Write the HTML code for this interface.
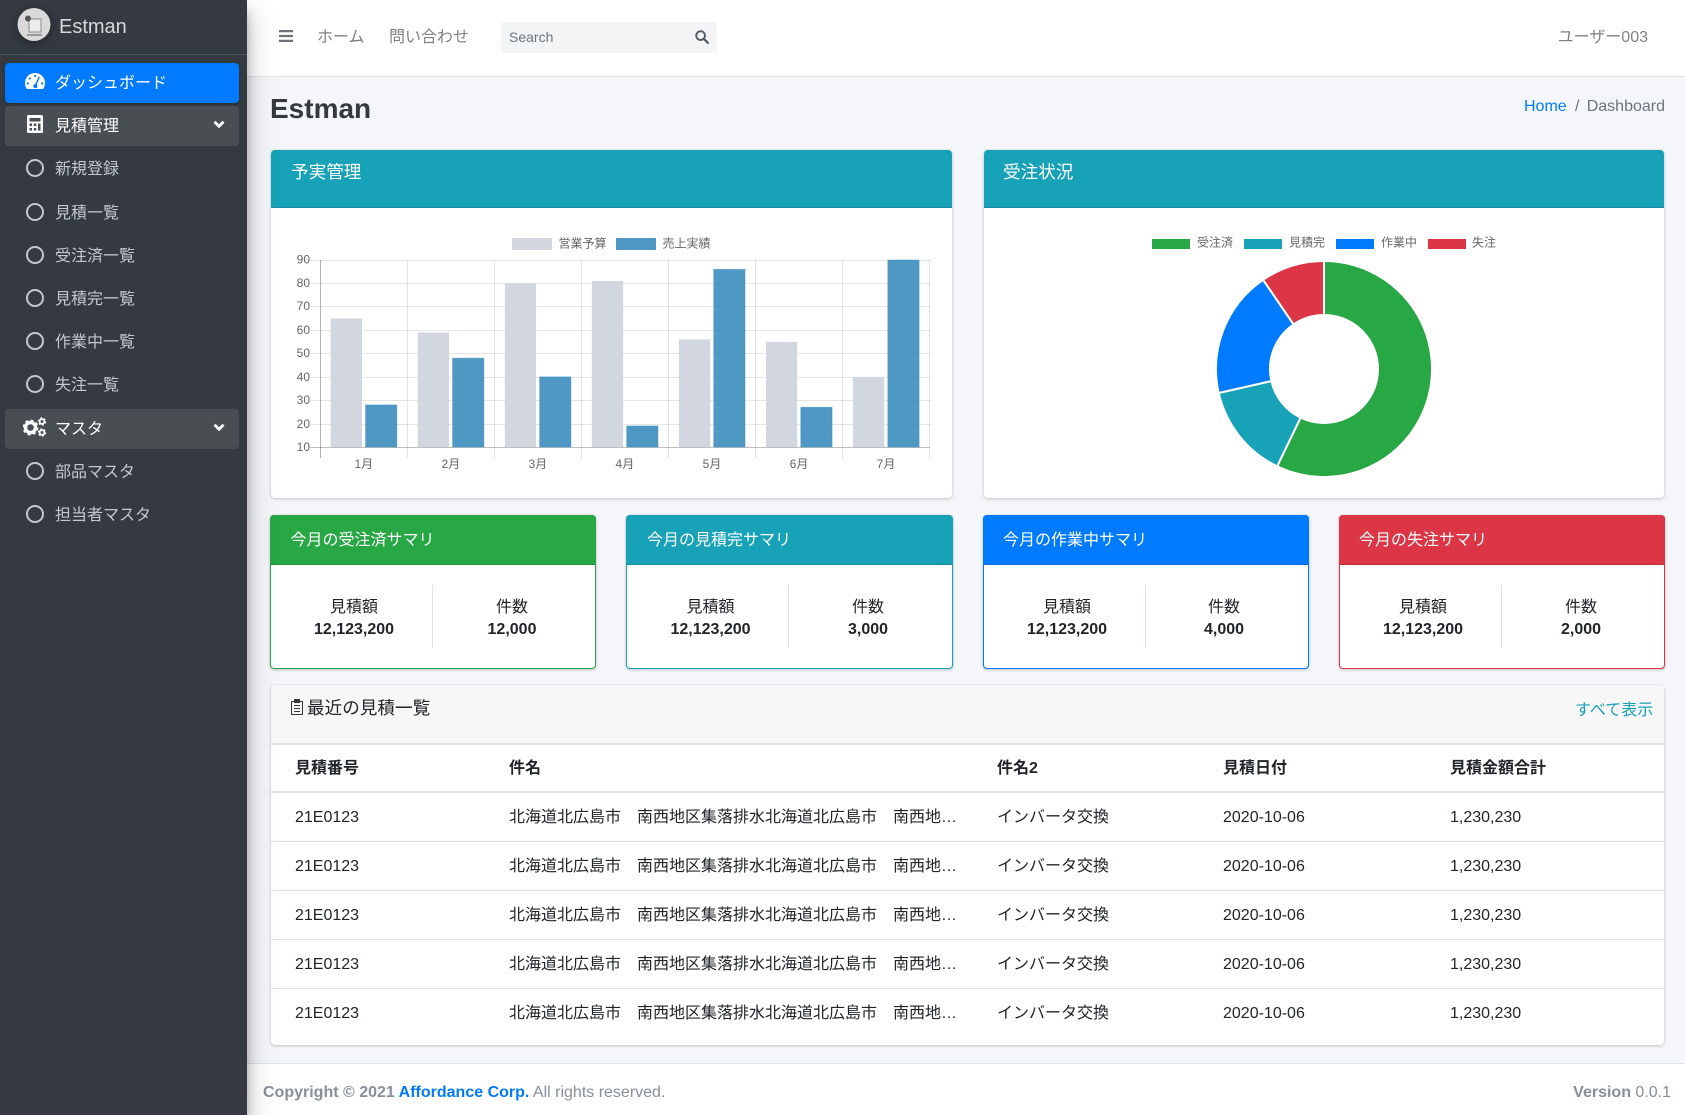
<!DOCTYPE html>
<html lang="ja"><head><meta charset="utf-8"><title>Estman</title>
<style>
html,body{margin:0;padding:0;width:1685px;height:1115px;overflow:hidden;background:#f4f6f9;font-family:"Liberation Sans","Noto Sans CJK JP",sans-serif;font-size:16px;color:#212529}
.a{position:absolute;box-sizing:border-box}
.t{position:absolute;white-space:nowrap;line-height:24px;height:24px;margin-top:2px}
.c{transform:translateX(-50%)}
.nv{color:#c2c7d0;left:55px}
.card{position:absolute;box-sizing:border-box;background:#fff;border-radius:4px;box-shadow:0 0 1px rgba(0,0,0,.125),0 1px 3px rgba(0,0,0,.2)}
.hd{position:absolute;left:0;right:0;top:0;border-radius:4px 4px 0 0;border-bottom:1px solid rgba(0,0,0,.125);box-sizing:border-box}
.b{font-weight:700}
.w{color:#fff}
.ln{position:absolute;left:271px;width:1393px;height:1px;background:#dee2e6}
.el{width:452px;overflow:hidden;text-overflow:ellipsis}
</style></head><body>

<!-- top nav -->
<div class="a" style="left:247px;top:0;width:1438px;height:77px;background:#fff;border-bottom:1px solid #dee2e6"></div>
<svg class="a" style="left:279px;top:30px" width="14" height="12"><path d="M0 0h14v2.2H0zM0 4.9h14v2.2H0zM0 9.8h14V12H0z" fill="#6f7378"/></svg>
<div class="t" style="left:317px;top:24px;color:rgba(0,0,0,.5)">ホーム</div>
<div class="t" style="left:389px;top:24px;color:rgba(0,0,0,.5)">問い合わせ</div>
<div class="a" style="left:501px;top:22px;width:216px;height:31px;background:#f2f4f6;border-radius:3px"></div>
<div class="t" style="left:509px;top:25px;margin-top:0;font-size:14px;color:#6c757d">Search</div>
<svg class="a" style="left:695px;top:30px" width="14" height="14" viewBox="0 0 15 15"><circle cx="6" cy="6" r="4.7" fill="none" stroke="#555b61" stroke-width="2"/><path d="M9.6 9.6L13.8 13.8" stroke="#555b61" stroke-width="2.4" stroke-linecap="round"/></svg>
<div class="t" style="right:37px;top:24px;color:rgba(0,0,0,.5)">ユーザー003</div>

<!-- page heading -->
<div class="t b" style="left:270px;top:91px;margin-top:0;height:36px;line-height:36px;font-size:28px;color:#343a40">Estman</div>
<div class="t" style="left:1524px;top:93px;color:#007bff">Home</div>
<div class="t" style="left:1575px;top:93px;color:#6c757d">/</div>
<div class="t" style="right:20px;top:93px;color:#6c757d">Dashboard</div>

<!-- bar chart card -->
<div class="card" style="left:271px;top:150px;width:681px;height:348px">
  <div class="hd" style="height:58px;background:#17a2b8"></div>
</div>
<div class="t w" style="left:291px;top:160px;margin-top:0;font-size:17.6px">予実管理</div>

<svg class="a" style="left:271px;top:208px" width="681" height="280" viewBox="271 208 681 280">
  <g stroke="rgba(0,0,0,.1)" stroke-width="1" fill="none">
    <path d="M310 260.5H930M310 283.5H930M310 306.5H930M310 330.5H930M310 353.5H930M310 377.5H930M310 400.5H930M310 424.5H930"/>
    <path d="M407.5 260V458M494.5 260V458M581.5 260V458M668.5 260V458M755.5 260V458M842.5 260V458M929.5 260V458"/>
  </g>
  <path d="M320.5 260V458" stroke="rgba(0,0,0,.3)" fill="none"/>
  <path d="M310 447.5H930" stroke="rgba(0,0,0,.25)" fill="none"/>
  <g fill="#d2d6de">
    <rect x="330.7" y="318.44" width="31.3" height="128.56"/>
    <rect x="417.76" y="332.46" width="31.3" height="114.54"/>
    <rect x="504.8" y="283.37" width="31.3" height="163.63"/>
    <rect x="591.84" y="281.04" width="31.3" height="165.96"/>
    <rect x="678.88" y="339.47" width="31.3" height="107.53"/>
    <rect x="765.92" y="341.81" width="31.3" height="105.19"/>
    <rect x="852.96" y="376.87" width="31.3" height="70.13"/>
  </g>
  <g fill="rgba(60,141,188,.9)" stroke="rgba(60,141,188,.45)">
    <rect x="365.56" y="404.92" width="31.3" height="42.08"/>
    <rect x="452.6" y="358.17" width="31.3" height="88.83"/>
    <rect x="539.64" y="376.87" width="31.3" height="70.13"/>
    <rect x="626.68" y="425.96" width="31.3" height="21.04"/>
    <rect x="713.72" y="269.35" width="31.3" height="177.65"/>
    <rect x="800.76" y="407.26" width="31.3" height="39.74"/>
    <rect x="887.8" y="260" width="31.3" height="187"/>
  </g>
  <rect x="512" y="238" width="40" height="12" fill="#d2d6de"/>
  <rect x="616" y="238" width="40" height="12" fill="#4f97c4"/>
  <g font-family="'Liberation Sans','Noto Sans CJK JP',sans-serif" font-size="12" fill="#666">
    <text x="558.5" y="247.5">営業予算</text>
    <text x="662.5" y="247.5">売上実績</text>
    <g text-anchor="end">
      <text x="310" y="263.5">90</text><text x="310" y="287">80</text><text x="310" y="310">70</text><text x="310" y="334">60</text><text x="310" y="357">50</text><text x="310" y="381">40</text><text x="310" y="404">30</text><text x="310" y="428">20</text><text x="310" y="451">10</text>
    </g>
    <g text-anchor="middle">
      <text x="363.8" y="468">1月</text><text x="450.9" y="468">2月</text><text x="537.9" y="468">3月</text><text x="624.9" y="468">4月</text><text x="712" y="468">5月</text><text x="799" y="468">6月</text><text x="886" y="468">7月</text>
    </g>
  </g>
</svg>

<!-- doughnut card -->
<div class="card" style="left:984px;top:150px;width:680px;height:348px">
  <div class="hd" style="height:58px;background:#17a2b8"></div>
</div>
<div class="t w" style="left:1003px;top:160px;margin-top:0;font-size:17.6px">受注状況</div>
<svg class="a" style="left:984px;top:208px" width="680" height="280" viewBox="984 208 680 280">
  <g stroke="#fff" stroke-width="2">
    <path fill="#28a745" d="M1324 261A108 108 0 1 1 1277.14 466.31L1300.57 417.65A54 54 0 1 0 1324 315Z"/>
    <path fill="#17a2b8" d="M1277.14 466.31A108 108 0 0 1 1218.71 393.03L1271.36 381.02A54 54 0 0 0 1300.57 417.65Z"/>
    <path fill="#007bff" d="M1218.71 393.03A108 108 0 0 1 1263.14 279.77L1293.57 324.39A54 54 0 0 0 1271.36 381.02Z"/>
    <path fill="#dc3545" d="M1263.14 279.77A108 108 0 0 1 1324 261L1324 315A54 54 0 0 0 1293.57 324.39Z"/>
  </g>
  <rect x="1152" y="239" width="38" height="10" fill="#28a745"/>
  <rect x="1244" y="239" width="38" height="10" fill="#17a2b8"/>
  <rect x="1336" y="239" width="38" height="10" fill="#007bff"/>
  <rect x="1428" y="239" width="38" height="10" fill="#dc3545"/>
  <g font-family="'Liberation Sans','Noto Sans CJK JP',sans-serif" font-size="12" fill="#666">
    <text x="1197" y="246.5">受注済</text><text x="1289" y="246.5">見積完</text><text x="1381" y="246.5">作業中</text><text x="1472" y="246.5">失注</text>
  </g>
</svg>

<!-- summary cards -->
<div class="card" style="left:270px;top:515px;width:326px;height:154px;border:1px solid #28a745"><div class="hd" style="left:-1px;right:-1px;top:-1px;height:50px;background:#28a745"></div></div>
<div class="card" style="left:626px;top:515px;width:327px;height:154px;border:1px solid #17a2b8"><div class="hd" style="left:-1px;right:-1px;top:-1px;height:50px;background:#17a2b8"></div></div>
<div class="card" style="left:983px;top:515px;width:326px;height:154px;border:1px solid #007bff"><div class="hd" style="left:-1px;right:-1px;top:-1px;height:50px;background:#007bff"></div></div>
<div class="card" style="left:1339px;top:515px;width:326px;height:154px;border:1px solid #dc3545"><div class="hd" style="left:-1px;right:-1px;top:-1px;height:50px;background:#dc3545"></div></div>

<div class="t w" style="left:290.5px;top:527px">今月の受注済サマリ</div>
<div class="t w" style="left:647px;top:527px">今月の見積完サマリ</div>
<div class="t w" style="left:1003px;top:527px">今月の作業中サマリ</div>
<div class="t w" style="left:1359px;top:527px">今月の失注サマリ</div>

<div class="a" style="left:432px;top:585px;width:1px;height:63px;background:#dee2e6"></div>
<div class="a" style="left:788px;top:585px;width:1px;height:63px;background:#dee2e6"></div>
<div class="a" style="left:1145px;top:585px;width:1px;height:63px;background:#dee2e6"></div>
<div class="a" style="left:1501px;top:585px;width:1px;height:63px;background:#dee2e6"></div>

<div class="t c" style="left:354px;top:594px">見積額</div><div class="t c b" style="left:354px;top:616px">12,123,200</div>
<div class="t c" style="left:512px;top:594px">件数</div><div class="t c b" style="left:512px;top:616px">12,000</div>
<div class="t c" style="left:710.5px;top:594px">見積額</div><div class="t c b" style="left:710.5px;top:616px">12,123,200</div>
<div class="t c" style="left:868px;top:594px">件数</div><div class="t c b" style="left:868px;top:616px">3,000</div>
<div class="t c" style="left:1067px;top:594px">見積額</div><div class="t c b" style="left:1067px;top:616px">12,123,200</div>
<div class="t c" style="left:1224px;top:594px">件数</div><div class="t c b" style="left:1224px;top:616px">4,000</div>
<div class="t c" style="left:1423px;top:594px">見積額</div><div class="t c b" style="left:1423px;top:616px">12,123,200</div>
<div class="t c" style="left:1581px;top:594px">件数</div><div class="t c b" style="left:1581px;top:616px">2,000</div>

<!-- table card -->
<div class="card" style="left:271px;top:685px;width:1393px;height:360px">
  <div class="hd" style="height:58px;background:#f7f7f7;border-bottom:0"></div>
</div>
<svg class="a" style="left:290px;top:699px" width="14" height="16" viewBox="0 0 14 16" fill="none" stroke="#33383d" stroke-width="1"><rect x="1.500" y="2.500" width="11" height="13"/><rect x="4.500" y=".5" width="5" height="3" fill="#33383d"/><path d="M4 6.500h6M4 9.500h6M4 12.500h6"/></svg>
<div class="t" style="left:307px;top:695px;margin-top:1px;font-size:17.6px">最近の見積一覧</div>
<div class="t" style="left:1575px;top:697px">
<span style="color:#17a2b8">すべて表示</span></div>
<div class="ln" style="top:743px;height:2px"></div>
<div class="ln" style="top:791px;height:2px"></div>
<div class="ln" style="top:841px"></div>
<div class="ln" style="top:890px"></div>
<div class="ln" style="top:939px"></div>
<div class="ln" style="top:988px"></div>

<div class="t b" style="left:295px;top:755px">見積番号</div>
<div class="t b" style="left:509px;top:755px">件名</div>
<div class="t b" style="left:997px;top:755px">件名2</div>
<div class="t b" style="left:1223px;top:755px">見積日付</div>
<div class="t b" style="left:1450px;top:755px">見積金額合計</div>

<div class="t" style="left:295px;top:804px">21E0123</div>
<div class="t el" style="left:509px;top:804px">北海道北広島市　南西地区集落排水北海道北広島市　南西地区集落排水</div>
<div class="t" style="left:997px;top:804px">インバータ交換</div>
<div class="t" style="left:1223px;top:804px">2020-10-06</div>
<div class="t" style="left:1450px;top:804px">1,230,230</div>

<div class="t" style="left:295px;top:853px">21E0123</div>
<div class="t el" style="left:509px;top:853px">北海道北広島市　南西地区集落排水北海道北広島市　南西地区集落排水</div>
<div class="t" style="left:997px;top:853px">インバータ交換</div>
<div class="t" style="left:1223px;top:853px">2020-10-06</div>
<div class="t" style="left:1450px;top:853px">1,230,230</div>

<div class="t" style="left:295px;top:902px">21E0123</div>
<div class="t el" style="left:509px;top:902px">北海道北広島市　南西地区集落排水北海道北広島市　南西地区集落排水</div>
<div class="t" style="left:997px;top:902px">インバータ交換</div>
<div class="t" style="left:1223px;top:902px">2020-10-06</div>
<div class="t" style="left:1450px;top:902px">1,230,230</div>

<div class="t" style="left:295px;top:951px">21E0123</div>
<div class="t el" style="left:509px;top:951px">北海道北広島市　南西地区集落排水北海道北広島市　南西地区集落排水</div>
<div class="t" style="left:997px;top:951px">インバータ交換</div>
<div class="t" style="left:1223px;top:951px">2020-10-06</div>
<div class="t" style="left:1450px;top:951px">1,230,230</div>

<div class="t" style="left:295px;top:1000px">21E0123</div>
<div class="t el" style="left:509px;top:1000px">北海道北広島市　南西地区集落排水北海道北広島市　南西地区集落排水</div>
<div class="t" style="left:997px;top:1000px">インバータ交換</div>
<div class="t" style="left:1223px;top:1000px">2020-10-06</div>
<div class="t" style="left:1450px;top:1000px">1,230,230</div>

<!-- footer -->
<div class="a" style="left:247px;top:1063px;width:1438px;height:52px;background:#fff;border-top:1px solid #dee2e6"></div>
<div class="t" style="left:263px;top:1080px;margin-top:1px;color:#869099"><b>Copyright © 2021 <span style="color:#007bff">Affordance Corp.</span></b> All rights reserved.</div>
<div class="t" style="right:14px;top:1080px;margin-top:1px;color:#869099"><b>Version</b> 0.0.1</div>

<!-- sidebar -->
<div class="a" style="left:0;top:0;width:247px;height:1115px;background:#343a40;box-shadow:0 14px 28px rgba(0,0,0,.25),0 10px 10px rgba(0,0,0,.22)"></div>
<div class="a" style="left:0;top:54px;width:247px;height:1px;background:#4b545c"></div>
<svg class="a" style="left:16px;top:6px;overflow:visible;filter:drop-shadow(0 3px 5px rgba(0,0,0,.35))" width="38" height="38" viewBox="0 0 38 38">
  <circle cx="18" cy="18.500" r="16.500" fill="#d9d9d9"/>
  <rect x="13" y="13" width="12" height="13" fill="#ececec" stroke="#8b8b8b" stroke-width="1"/>
  <circle cx="12" cy="12.500" r="3" fill="#555"/>
  <rect x="11" y="28" width="15" height="2" fill="#999"/>
</svg>
<div class="t" style="left:59px;top:13px;font-size:20px;color:rgba(255,255,255,.8)">Estman</div>

<div class="a" style="left:5px;top:63px;width:234px;height:40px;background:#007bff;border-radius:4px;box-shadow:0 1px 3px rgba(0,0,0,.2)"></div>
<svg class="a" style="left:25px;top:73px" width="20" height="16" viewBox="0 0 20 16"><path d="M2 16Q0 13.500 0 10A10 10 0 0 1 20 10Q20 13.500 18 16Z" fill="#fff"/><g fill="#007bff"><circle cx="10" cy="3" r="1.100"/><circle cx="4.800" cy="5.500" r="1.100"/><circle cx="2.800" cy="10.500" r="1.100"/><circle cx="17.200" cy="10.500" r="1.100"/><path d="M13.600 3.600L14.900 4.100L11.800 11.500A2.100 2.100 0 1 1 10.300 11Z"/></g></svg>
<div class="t w" style="left:55px;top:70px">ダッシュボード</div>

<div class="a" style="left:5px;top:106px;width:234px;height:40px;background:#494e53;border-radius:4px"></div>
<svg class="a" style="left:27px;top:115px" width="16" height="18" viewBox="0 0 16 18"><rect width="16" height="18" rx="1.500" fill="#fff"/><g fill="#494e53"><rect x="2.500" y="3" width="11" height="3.500"/><rect x="2.500" y="8.500" width="2.500" height="2.500"/><rect x="6.800" y="8.500" width="2.500" height="2.500"/><rect x="11" y="8.500" width="2.500" height="7"/><rect x="2.500" y="13" width="2.500" height="2.500"/><rect x="6.800" y="13" width="2.500" height="2.500"/></g></svg>
<div class="t w" style="left:55px;top:113px">見積管理</div>
<svg class="a" style="left:213px;top:120px" width="12" height="9" viewBox="0 0 12 9"><path d="M1.500 1.800L6 6.300L10.500 1.800" fill="none" stroke="#fff" stroke-width="2.800"/></svg>

<svg class="a" style="left:25px;top:158px" width="20" height="370" viewBox="0 0 20 370" fill="none" stroke="#c2c7d0" stroke-width="2">
  <circle cx="10" cy="10" r="8"/><circle cx="10" cy="54" r="8"/><circle cx="10" cy="97" r="8"/><circle cx="10" cy="140" r="8"/><circle cx="10" cy="183" r="8"/><circle cx="10" cy="226" r="8"/><circle cx="10" cy="313" r="8"/><circle cx="10" cy="356" r="8"/>
</svg>

<div class="t nv" style="top:156px">新規登録</div>
<div class="t nv" style="top:200px">見積一覧</div>
<div class="t nv" style="top:243px">受注済一覧</div>
<div class="t nv" style="top:286px">見積完一覧</div>
<div class="t nv" style="top:329px">作業中一覧</div>
<div class="t nv" style="top:372px">失注一覧</div>

<div class="a" style="left:5px;top:409px;width:234px;height:40px;background:#494e53;border-radius:4px"></div>
<svg class="a" style="left:23px;top:417px" width="24" height="20" viewBox="0 0 24 20" fill="none">
  <circle cx="7.500" cy="10.500" r="5" stroke="#fff" stroke-width="3.400"/>
  <circle cx="7.500" cy="10.500" r="6.800" stroke="#fff" stroke-width="2.400" stroke-dasharray="2.700 2.640"/>
  <circle cx="19" cy="4.500" r="2.400" stroke="#fff" stroke-width="1.800"/>
  <circle cx="19" cy="4.500" r="3.500" stroke="#fff" stroke-width="1.400" stroke-dasharray="1.800 1.870"/>
  <circle cx="19" cy="15.500" r="2.400" stroke="#fff" stroke-width="1.800"/>
  <circle cx="19" cy="15.500" r="3.500" stroke="#fff" stroke-width="1.400" stroke-dasharray="1.800 1.870"/>
</svg>
<div class="t w" style="left:55px;top:416px">マスタ</div>
<svg class="a" style="left:213px;top:423px" width="12" height="9" viewBox="0 0 12 9"><path d="M1.500 1.800L6 6.300L10.500 1.800" fill="none" stroke="#fff" stroke-width="2.800"/></svg>

<div class="t nv" style="top:459px">部品マスタ</div>
<div class="t nv" style="top:502px">担当者マスタ</div>

</body></html>
